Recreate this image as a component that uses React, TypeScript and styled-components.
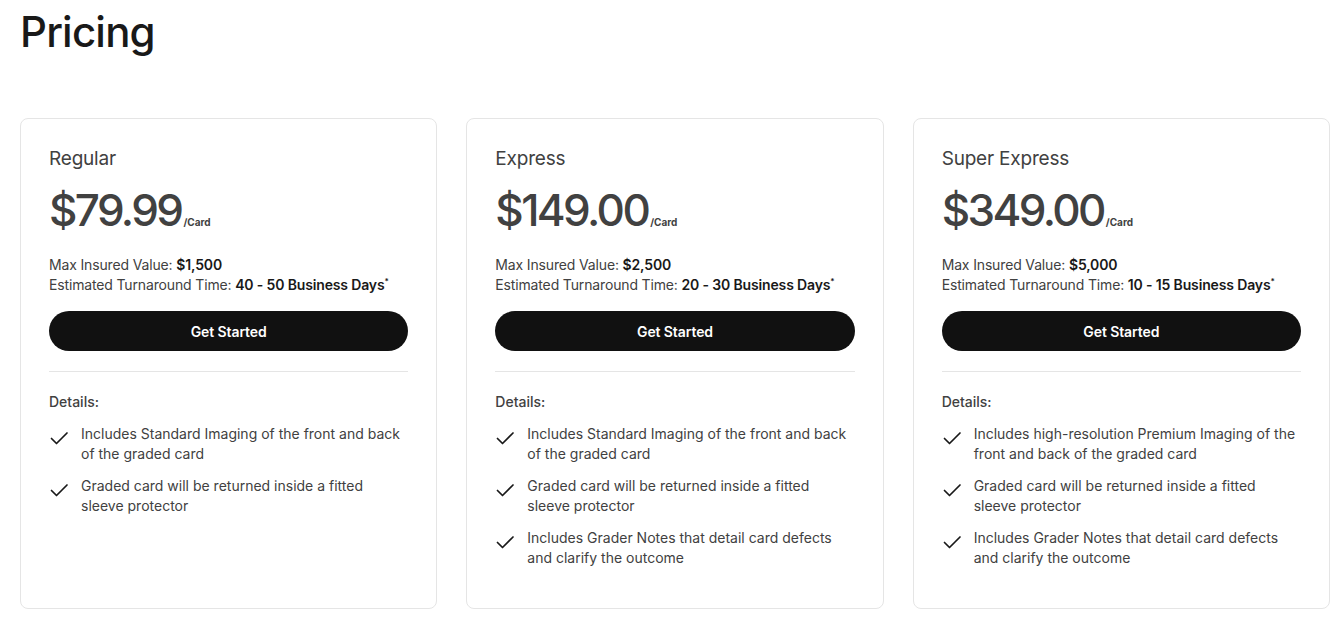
import styled, {createGlobalStyle} from 'styled-components';

type Plan = {
    name: string;
    price: string;
    insured: string;
    turnaround: string;
    details: string[];
};

const plans: Plan[] = [
    {
        name: 'Regular',
        price: '$79.99',
        insured: '$1,500',
        turnaround: '40 - 50 Business Days',
        details: [
            'Includes Standard Imaging of the front and back of the graded card',
            'Graded card will be returned inside a fitted sleeve protector',
        ],
    },
    {
        name: 'Express',
        price: '$149.00',
        insured: '$2,500',
        turnaround: '20 - 30 Business Days',
        details: [
            'Includes Standard Imaging of the front and back of the graded card',
            'Graded card will be returned inside a fitted sleeve protector',
            'Includes Grader Notes that detail card defects and clarify the outcome',
        ],
    },
    {
        name: 'Super Express',
        price: '$349.00',
        insured: '$5,000',
        turnaround: '10 - 15 Business Days',
        details: [
            'Includes high-resolution Premium Imaging of the front and back of the graded card',
            'Graded card will be returned inside a fitted sleeve protector',
            'Includes Grader Notes that detail card defects and clarify the outcome',
        ],
    },
];

const Check = () => (
    <svg width="20" height="20" viewBox="0 0 20 20" fill="none">
        <path d="M2.5 10.5l5 5L18 5" stroke="#191919" strokeWidth="1.7" strokeLinecap="round" strokeLinejoin="round"/>
    </svg>
);

const PlanCard = ({plan}: { plan: Plan }) => (
    <Card>
        <PlanName>{plan.name}</PlanName>
        <PriceRow>
            <Price>{plan.price}</Price>
            <PerCard>/Card</PerCard>
        </PriceRow>
        <Facts>
            <div>Max Insured Value: <b>{plan.insured}</b></div>
            <div>Estimated Turnaround Time: <b>{plan.turnaround}<sup>*</sup></b></div>
        </Facts>
        <StartButton>Get Started</StartButton>
        <Divider/>
        <DetailsTitle>Details:</DetailsTitle>
        <DetailList>
            {plan.details.map(d => (
                <DetailItem key={d}>
                    <Check/>
                    <span>{d}</span>
                </DetailItem>
            ))}
        </DetailList>
    </Card>
);

export default function App() {
    return (
        <>
            <GlobalStyle/>
            <Page>
                <Title>Pricing</Title>
                <Grid>
                    {plans.map(p => <PlanCard key={p.name} plan={p}/>)}
                </Grid>
            </Page>
        </>
    );
}

const GlobalStyle = createGlobalStyle`
  body {
    margin: 0;
    background: #fff;
    font-family: Inter, "Liberation Sans", sans-serif;
    color: #333;
  }
`

const Page = styled.div`
  padding: 0 12px 0 20px;
`

const Title = styled.h1`
  margin: 0;
  padding-top: 6px;
  height: 112px;
  font-size: 42px;
  font-weight: 500;
  letter-spacing: -0.8px;
  color: #191919;
`

const Grid = styled.div`
  display: grid;
  grid-template-columns: repeat(3, 1fr);
  gap: 29px;
`

const Card = styled.div`
  border: 1px solid #e5e5e5;
  border-radius: 8px;
  padding: 28px 28px 40px;
  display: flex;
  flex-direction: column;
`

const PlanName = styled.div`
  font-size: 19px;
  color: #414141;
  letter-spacing: -0.2px;
`

const PriceRow = styled.div`
  display: flex;
  align-items: baseline;
  margin-top: 13px;
`

const Price = styled.span`
  font-size: 44px;
  font-weight: 500;
  color: #414141;
  letter-spacing: -2.6px;
`

const PerCard = styled.span`
  font-size: 10px;
  font-weight: 700;
  color: #414141;
  margin-left: 2px;
`

const Facts = styled.div`
  margin-top: 18px;
  font-size: 14px;
  line-height: 20px;
  letter-spacing: -0.15px;
  color: #414141;

  b {
    font-weight: 600;
    color: #191919;
  }

  sup {
    font-size: 8px;
    vertical-align: 6px;
    line-height: 0;
  }
`

const StartButton = styled.button`
  margin-top: 16px;
  height: 40px;
  border: none;
  border-radius: 20px;
  background: #111;
  color: #fff;
  font-family: inherit;
  font-size: 14px;
  font-weight: 600;
  letter-spacing: -0.1px;
  cursor: pointer;
`

const Divider = styled.hr`
  border: none;
  border-top: 1px solid #e5e5e5;
  margin: 20px 0 0;
`

const DetailsTitle = styled.div`
  margin-top: 21px;
  font-size: 14px;
  font-weight: 500;
  color: #414141;
`

const DetailList = styled.ul`
  list-style: none;
  margin: 14px 0 0;
  padding: 0;
  display: flex;
  flex-direction: column;
  gap: 12px;
`

const DetailItem = styled.li`
  display: flex;
  gap: 12px;
  font-size: 14px;
  line-height: 20px;
  color: #414141;

  svg {
    flex: none;
    margin-top: 4px;
  }
`
